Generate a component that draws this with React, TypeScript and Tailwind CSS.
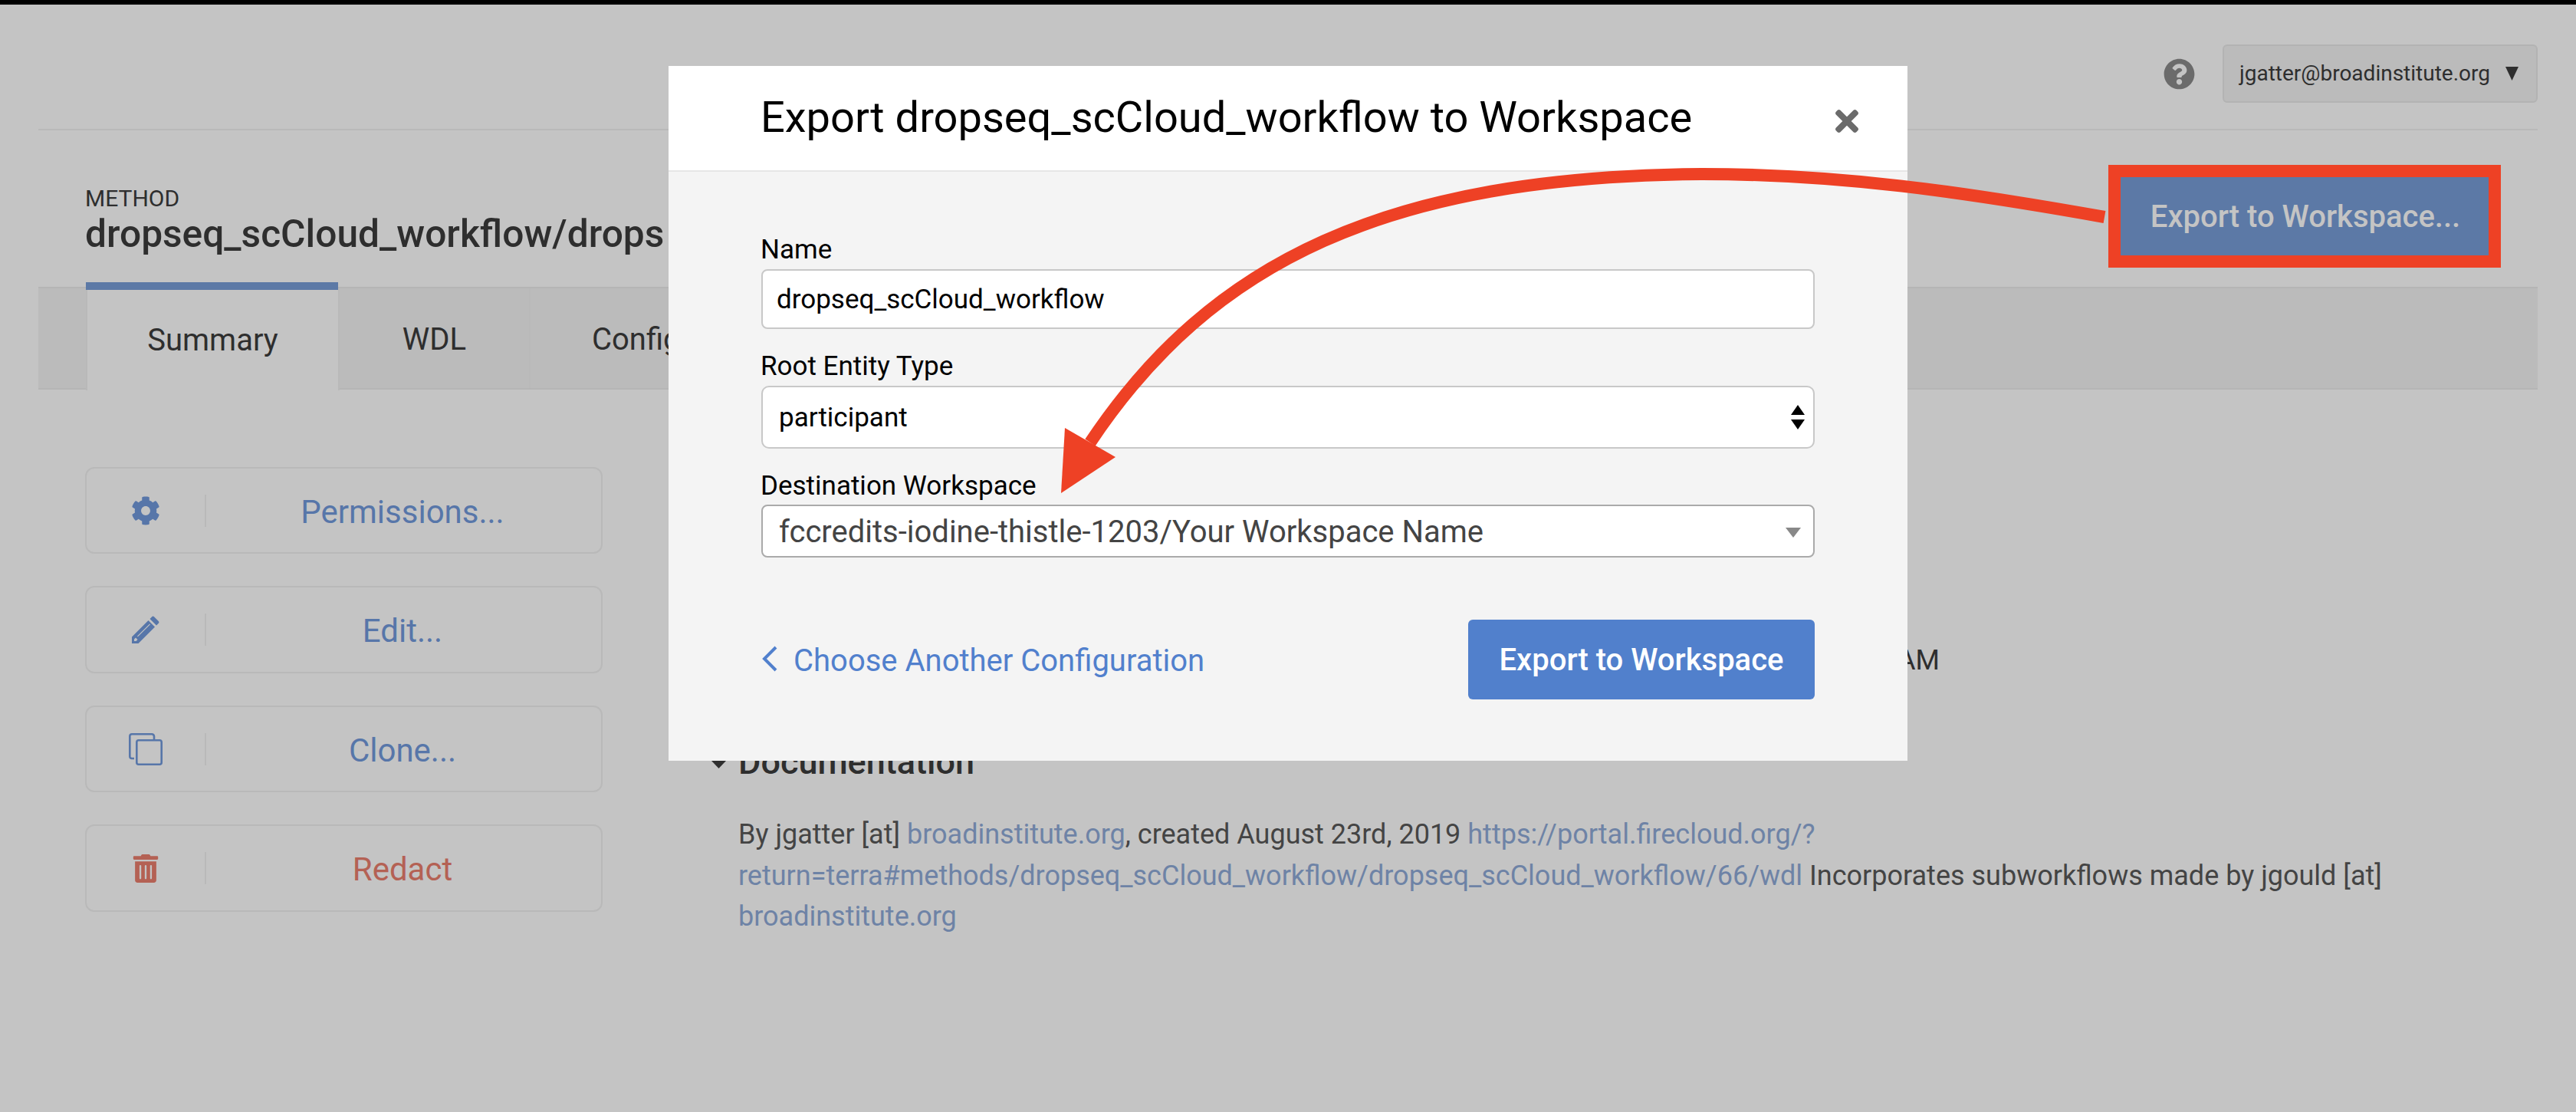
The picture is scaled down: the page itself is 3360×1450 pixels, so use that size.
import React from "react";
import { FaCog, FaQuestionCircle, FaTimes, FaTrashAlt } from "react-icons/fa";

function Pencil() {
  return (
    <svg viewBox="0 0 36 36" className="w-[36px] h-[36px]" fill="#5776a9">
      <path fillRule="evenodd" d="M0 36V27.5L21.5 6 30 14.5 8.5 36H0ZM3 30.5V33H5.5L7.5 31 5 28.5 3 30.5ZM7 26.5 7.8 27.3 24 11.2 23.2 10.4 7 26.5ZM23.5 4 26.2 1.2C27 .4 28.2.4 29 1.2L34.8 7C35.6 7.8 35.6 9 34.8 9.8L32 12.5 23.5 4Z" />
    </svg>
  );
}

function Clone() {
  return (
    <svg viewBox="0 0 44 42" className="w-[44px] h-[42px]" fill="none" stroke="#5776a9" strokeWidth="2.6">
      <path d="M7 33H4C2.3 33 1.3 32 1.3 30.3V4C1.3 2.3 2.3 1.3 4 1.3H30C31.7 1.3 32.7 2.3 33 4V9" />
      <rect x="10.3" y="9.3" width="32.4" height="31.4" rx="2.5" />
    </svg>
  );
}

const actions = [
  { label: "Permissions...", icon: <FaCog className="w-[38px] h-[38px] text-[#5776a9]" />, color: "text-[#5776a9]", h: "h-[113px]" },
  { label: "Edit...", icon: <Pencil />, color: "text-[#5776a9]", h: "h-[114px]" },
  { label: "Clone...", icon: <Clone />, color: "text-[#5776a9]", h: "h-[113px]" },
  { label: "Redact", icon: <FaTrashAlt className="w-[34px] h-[37px] text-[#b46154]" />, color: "text-[#b46154]", h: "h-[114px]" },
];

function Field({ label, className, children }: { label: string; className: string; children: React.ReactNode }) {
  return (
    <div className={className}>
      <div className="h-[40px] pt-[2px] -ml-[1px] text-[35px] leading-[40px] text-black">{label}</div>
      {children}
    </div>
  );
}

export default function App() {
  return (
    <div className="relative w-full h-[1450px] overflow-hidden bg-[#c4c4c4] [font-family:Roboto,sans-serif] text-[#2e2e2e]">
      <div className="h-[6px] bg-black" />
      <header className="mx-[50px] h-[164px] border-b-2 border-[#b9b9b9] flex items-center justify-end pt-[18px]">
        <FaQuestionCircle className="w-[41px] h-[41px] text-[#6b6b6b] mr-[36px]" />
        <div className="w-[411px] h-[76px] rounded-[6px] border-2 border-[#b3b3b3] bg-[#bbbbbb] flex items-center pl-[20px] text-[28px] text-[#2e2e2e]">
          <span>jgatter@broadinstitute.org</span>
          <svg viewBox="0 0 17 18" className="w-[17px] h-[18px] ml-[20px]" fill="#2e2e2e"><polygon points="0,0 17,0 8.5,18" /></svg>
        </div>
      </header>

      <section className="mx-[50px] h-[204px] pl-[61px] pt-[71px]">
        <div className="text-[30px] leading-[36px] text-[#2e2e2e]">METHOD</div>
        <div className="text-[49.7px] leading-[56px] font-medium whitespace-nowrap">dropseq_scCloud_workflow/drops</div>
      </section>

      <nav className="mx-[50px] h-[134px] bg-[#bbbbbb] border-y-2 border-[#b5b5b5] flex pl-[62px] text-[40px] text-[#2e2e2e]">
        <div className="relative w-[331px] h-[133px] bg-[#c4c4c4] flex items-center justify-center border-x-2 border-[#b9b9b9] pt-[3px]">
          <div className="absolute left-[-2px] right-[0px] top-[-8px] h-[10px] bg-[#5c79a6]" />
          Summary
        </div>
        <div className="w-[249px] flex items-center justify-center border-r-2 border-[#b9b9b9] pt-[3px]">WDL</div>
        <div className="pl-[80px] flex items-center pt-[3px]">Configurations</div>
      </nav>

      <main className="flex pt-[101px]">
        <div className="ml-[111px] w-[675px] flex flex-col gap-[42px]">
          {actions.map((a) => (
            <div key={a.label} className={`${a.h} rounded-[12px] border-2 border-[#b9b9b9] flex items-center`}>
              <div className="w-[156px] h-[42px] border-r-2 border-[#b9b9b9] flex items-center justify-center">{a.icon}</div>
              <div className={`flex-1 text-center text-[42px] pr-[3px] pt-[3px] ${a.color}`}>{a.label}</div>
            </div>
          ))}
        </div>
        <div className="ml-[177px] flex-1">
          <div className="w-[1567px] h-[279px] pt-[232px] text-right text-[36px] leading-[40px] text-[#2e2e2e]">AM</div>
          <div className="relative mt-[76px] h-[60px] text-[45px] leading-[60px] font-medium text-[#2e2e2e]">
            <svg viewBox="0 0 19 10" className="absolute left-[-35px] top-[28px] w-[19px] h-[10px]" fill="#2e2e2e"><polygon points="0,0 19,0 9.5,10" /></svg>
            Documentation
          </div>
          <div className="mt-[38px] text-[36px] leading-[53.5px] text-[#444444] whitespace-nowrap">
            By jgatter [at] <span className="text-[#6e83a6]">broadinstitute.org</span>, created August 23rd, 2019 <span className="text-[#6e83a6]">https://portal.firecloud.org/?</span>
            <br />
            <span className="text-[#6e83a6]">return=terra#methods/dropseq_scCloud_workflow/dropseq_scCloud_workflow/66/wdl</span> Incorporates subworkflows made by jgould [at]
            <br />
            <span className="text-[#6e83a6]">broadinstitute.org</span>
          </div>
        </div>
      </main>

      {/* modal */}
      <div className="absolute left-[872px] top-[86px] w-[1616px] h-[906px] bg-[#f4f4f4] flex flex-col">
        <div className="h-[138px] shrink-0 bg-white border-b-2 border-[#e6e6e6] flex items-start pl-[120px] pr-[64px] justify-between">
          <div className="text-[56px] leading-[66px] mt-[34px] text-black whitespace-nowrap">Export dropseq_scCloud_workflow to Workspace</div>
          <FaTimes className="w-[30px] h-[44px] mt-[50px] text-[#6b6b6b]" />
        </div>
        <div className="px-[121px] pt-[80px] flex flex-col">
          <Field label="Name" className="">
            <div className="mt-[7px] h-[78px] rounded-[8px] border-2 border-[#c8c8c8] bg-white flex items-center pl-[18px] pt-[3px] text-[35px] text-black">dropseq_scCloud_workflow</div>
          </Field>
          <Field label="Root Entity Type" className="mt-[27px]">
            <div className="mt-[7px] h-[82px] rounded-[10px] border-2 border-[#c8c8c8] bg-white flex items-center justify-between pl-[21px] pr-[11px] pt-[3px] text-[35px] text-black">
              participant
              <svg viewBox="0 0 18 32" className="w-[18px] h-[32px] -mt-[4px]" fill="#000"><polygon points="9,0 18,13 0,13" /><polygon points="0,19 18,19 9,32" /></svg>
            </div>
          </Field>
          <Field label="Destination Workspace" className="mt-[27px]">
            <div className="mt-[6px] h-[69px] rounded-[8px] border-2 border-[#aaaaaa] bg-white flex items-center justify-between pl-[21px] pr-[16px] pt-[3px] text-[40px] text-[#444444]">
              fccredits-iodine-thistle-1203/Your Workspace Name
              <svg viewBox="0 0 20 13" className="w-[20px] h-[13px]" fill="#888888"><polygon points="0,0 20,0 10,13" /></svg>
            </div>
          </Field>
          <div className="mt-[81px] flex items-center justify-between">
            <div className="flex items-center pt-[3px] text-[40px] text-[#5180cd]">
              <svg viewBox="0 0 21 34" className="w-[21px] h-[34px] mr-[21px] -mt-[5px]" fill="none" stroke="#5180cd" strokeWidth="4"><polyline points="19,2 4,17 19,32" /></svg>
              Choose Another Configuration
            </div>
            <div className="w-[452px] h-[104px] rounded-[6px] bg-[#5180cc] flex items-center justify-center pt-[2px] text-[40px] font-medium text-white">Export to Workspace</div>
          </div>
        </div>
      </div>

      {/* page-level Export button, highlighted */}
      <div className="absolute left-[2765px] top-[231px] w-[481px] h-[102px] bg-[#5c79a6] flex items-center justify-center pl-[3px] pt-[2px] text-[40px] font-medium text-[#c4c4c4]">Export to Workspace...</div>

      {/* annotation */}
      <svg className="absolute left-0 top-0 w-[3360px] h-[1450px] pointer-events-none" viewBox="0 0 3360 1450" fill="none">
        <rect x="2758" y="223" width="496" height="118" stroke="#ee4125" strokeWidth="16" />
        <path d="M2745 283C2560 250 2400 227 2220 227C1810 230 1580 340 1422 577" stroke="#ee4125" strokeWidth="16" />
        <polygon points="1384,643 1389,558 1455,596" fill="#ee4125" />
      </svg>
    </div>
  );
}
